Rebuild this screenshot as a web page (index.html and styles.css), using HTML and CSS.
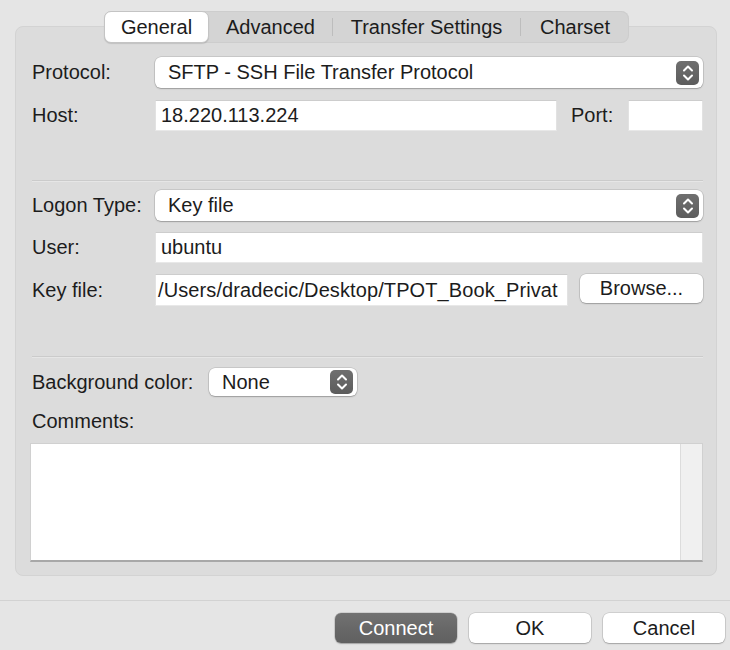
FILE: index.html
```html
<!DOCTYPE html>
<html>
<head>
<meta charset="utf-8">
<link rel="stylesheet" href="styles.css">
</head>
<body>
<div class="window">
  <div class="tabs">
    <div class="seg sel t-general">General</div>
    <div class="seg t-advanced">Advanced</div>
    <div class="divider"></div>
    <div class="seg t-transfer">Transfer Settings</div>
    <div class="divider"></div>
    <div class="seg t-charset">Charset</div>
  </div>
  <div class="panel">
    <div class="row r-protocol">
      <div class="lbl">Protocol:</div>
      <div class="select grow"><span class="val">SFTP - SSH File Transfer Protocol</span>
        <span class="step"><svg width="22" height="24" viewBox="0 0 22 24"><path d="M7 9.5 L11 5.5 L15 9.5 M7 14.5 L11 18.5 L15 14.5" fill="none" stroke="#fff" stroke-width="2" stroke-linecap="round" stroke-linejoin="round"/></svg></span></div>
    </div>
    <div class="row r-host">
      <div class="lbl">Host:</div>
      <div class="input host">18.220.113.224</div>
      <div class="lbl port-lbl">Port:</div>
      <div class="input port"></div>
    </div>
    <div class="sep sep1"></div>
    <div class="row r-logon">
      <div class="lbl">Logon Type:</div>
      <div class="select grow"><span class="val">Key file</span>
        <span class="step"><svg width="22" height="24" viewBox="0 0 22 24"><path d="M7 9.5 L11 5.5 L15 9.5 M7 14.5 L11 18.5 L15 14.5" fill="none" stroke="#fff" stroke-width="2" stroke-linecap="round" stroke-linejoin="round"/></svg></span></div>
    </div>
    <div class="row r-user">
      <div class="lbl">User:</div>
      <div class="input grow">ubuntu</div>
    </div>
    <div class="row r-key">
      <div class="lbl">Key file:</div>
      <div class="input keyfile">/Users/dradecic/Desktop/TPOT_Book_Privat</div>
      <div class="btn browse">Browse...</div>
    </div>
    <div class="sep sep2"></div>
    <div class="row r-bg">
      <div class="lbl bg-lbl">Background color:</div>
      <div class="select small"><span class="val">None</span>
        <span class="step"><svg width="22" height="24" viewBox="0 0 22 24"><path d="M7 9.5 L11 5.5 L15 9.5 M7 14.5 L11 18.5 L15 14.5" fill="none" stroke="#fff" stroke-width="2" stroke-linecap="round" stroke-linejoin="round"/></svg></span></div>
    </div>
    <div class="comments-lbl">Comments:</div>
    <div class="textarea">
      <div class="ta-body"></div>
      <div class="ta-scroll"></div>
    </div>
  </div>
  <div class="bottom-line"></div>
  <div class="buttons">
    <div class="btn primary">Connect</div>
    <div class="btn">OK</div>
    <div class="btn">Cancel</div>
  </div>
</div>
</body>
</html>
```

FILE: styles.css
```css
* { box-sizing: border-box; }
html, body {
  margin: 0;
  padding: 0;
  background: #e5e5e5;
}
body {
  font-family: "Liberation Sans", Arial, sans-serif;
  font-size: 20px;
  color: #1c1c1c;
  width: 730px;
  height: 650px;
  overflow: hidden;
}
.window {
  display: flex;
  flex-direction: column;
}
.tabs {
  position: relative;
  z-index: 1;
  align-self: center;
  margin-left: 3px;
  margin-top: 11px;
  margin-bottom: -17px;
  height: 32px;
  display: flex;
  align-items: center;
  background: #d4d4d4;
  box-shadow: inset 0 0 0 1px #cdcdcd;
  border-radius: 8px;
}
.seg {
  height: 30px;
  line-height: 30px;
  text-align: center;
  white-space: nowrap;
}
.t-general { width: 105px; }
.t-advanced { width: 123px; }
.t-transfer { width: 187px; }
.t-charset { width: 108px; }
.seg.sel {
  background: #fff;
  border-radius: 7px;
  height: 32px;
  border: 1px solid #c4c4c4;
  box-shadow: 0 1px 1px rgba(0,0,0,0.12);
  line-height: 30px;
}
.divider {
  width: 1px;
  height: 18px;
  background: #bdbdbd;
}
.panel {
  margin-left: 15px;
  width: 702px;
  background: #dcdcdc;
  border: 1px solid #d3d3d3;
  border-radius: 8px;
  padding: 30px 13px 13px 16px;
  display: flex;
  flex-direction: column;
}
.row {
  display: flex;
  align-items: center;
  height: 31px;
}
.lbl {
  width: 123px;
  flex: none;
  white-space: nowrap;
}
.grow { flex: 1; }
.r-host { margin-top: 12px; }
.r-logon { margin-top: 9px; }
.r-user { margin-top: 11px; }
.r-key { margin-top: 11px; height: 32px; }
.r-bg { margin-top: 11px; height: 28px; }
.sep {
  height: 1px;
  background: #cbcbcb;
  box-shadow: 0 1px 0 #e6e6e6;
}
.sep1 { margin-top: 49px; }
.sep2 { margin-top: 50px; }
.select {
  height: 100%;
  background: #fff;
  border-radius: 6px;
  box-shadow: 0 0 0 0.5px rgba(0,0,0,0.18), 0 1px 1.5px rgba(0,0,0,0.22);
  display: flex;
  align-items: center;
  justify-content: space-between;
  padding: 0 4px 0 13px;
}
.select.small {
  width: 148px;
  flex: none;
}
.val { white-space: nowrap; }
.step {
  width: 23px;
  height: 24px;
  border-radius: 5px;
  background: linear-gradient(#6f6f6f, #666 50%, #5c5c5c);
  display: flex;
  align-items: center;
  justify-content: center;
}
.step svg { display: block; }
.input {
  height: 100%;
  background: #fff;
  border-top: 1px solid #cdcdcd;
  border-left: 1px solid #e2e2e2;
  border-right: 1px solid #e2e2e2;
  border-bottom: 1px solid #e8e8e8;
  padding: 0 5px;
  display: flex;
  align-items: center;
  white-space: nowrap;
  overflow: hidden;
}
.host { width: 402px; flex: none; }
.port-lbl { width: auto; margin-left: 14px; margin-right: 15px; }
.port { flex: 1; }
.keyfile {
  width: 413px;
  flex: none;
  padding-left: 2px;
  letter-spacing: 0.1px;
}
.btn {
  height: 30px;
  width: 122px;
  background: #fff;
  border-radius: 6px;
  box-shadow: 0 0 0 0.5px rgba(0,0,0,0.18), 0 1px 1.5px rgba(0,0,0,0.22);
  display: flex;
  align-items: center;
  justify-content: center;
  white-space: nowrap;
}
.browse {
  margin-left: 12px;
  flex: 1;
  height: 29px;
  align-self: flex-start;
}
.bg-lbl { width: 177px; }
.comments-lbl {
  margin-top: 13px;
  line-height: 24px;
  height: 24px;
}
.textarea {
  margin-top: 10px;
  margin-left: -2px;
  height: 119px;
  display: flex;
  border: 1px solid #d0d0d0;
  border-bottom: 2px solid #a8a8a8;
  background: #fff;
}
.ta-body { flex: 1; background: #fff; }
.ta-scroll {
  width: 22px;
  background: #f0f0f0;
  border-left: 1px solid #dcdcdc;
}
.bottom-line {
  margin-top: 24px;
  height: 1px;
  background: #d2d2d2;
}
.buttons {
  display: flex;
  justify-content: flex-end;
  gap: 12px;
  margin-top: 12px;
  padding-right: 5px;
}
.btn.primary {
  background: linear-gradient(#727272, #686868 50%, #606060);
  color: #fff;
}
```
